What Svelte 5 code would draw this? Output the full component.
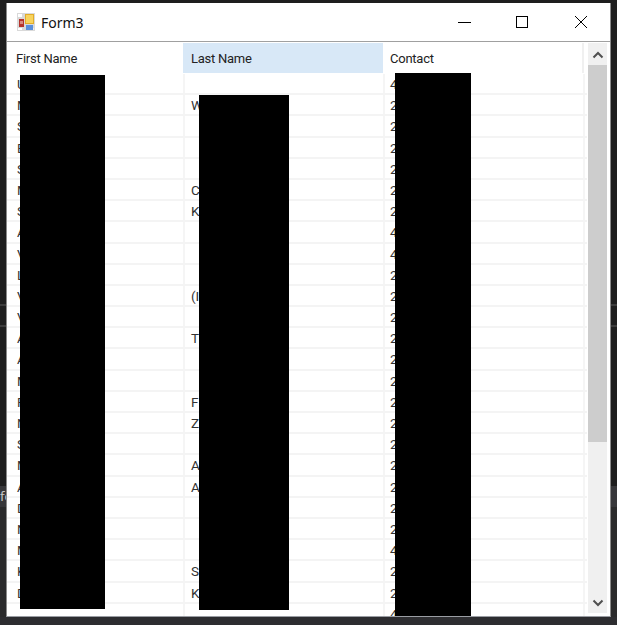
<script>
	// first letters that stay visible beside the redaction blocks, row by row
	const rows = [
		['U', '', '4'], ['M', 'W', '2'], ['S', '', '2'], ['B', '', '2'], ['S', '', '2'],
		['M', 'C', '2'], ['S', 'K', '2'], ['A', '', '4'], ['V', '', '4'], ['L', '', '2'],
		['V', '(I', '2'], ['V', '', '2'], ['A', 'T', '2'], ['A', '', '2'], ['M', '', '2'],
		['F', 'F', '2'], ['N', 'Z', '2'], ['S', '', '2'], ['M', 'A', '2'], ['A', 'A', '2'],
		['D', '', '2'], ['N', '', '2'], ['M', '', '4'], ['K', 'S', '2'], ['D', 'K', '2'],
		['', '', '4']
	];
</script>

<div class="desktop">
	<span class="behind">fo</span>
	<div class="window">
		<div class="titlebar">
			<svg class="appicon" width="18" height="18" viewBox="0 0 18 18">
				<rect x="0" y="0" width="18" height="18" fill="#d9d9d9" />
				<rect x="1" y="1" width="4" height="3" fill="#fff" />
				<rect x="1" y="15" width="4" height="2" fill="#fff" />
				<rect x="13" y="15" width="4" height="2" fill="#eee" />
				<rect x="2" y="6" width="5" height="8" fill="#b5332c" />
				<rect x="3" y="8" width="3" height="3" fill="#d98a80" />
				<rect x="8" y="1" width="9" height="10" fill="#e2ad2a" />
				<rect x="9" y="2" width="7" height="8" fill="#f8d45e" />
				<rect x="9" y="12" width="7" height="5" fill="#5a90dc" />
			</svg>
			<span class="title">Form3</span>
			<div class="controls">
				<svg width="14" height="14" viewBox="0 0 14 14"><path d="M0 7.5H13" stroke="#000" fill="none" /></svg>
				<svg width="14" height="14" viewBox="0 0 14 14"><rect x="0.5" y="1.5" width="11" height="11" stroke="#000" fill="none" /></svg>
				<svg width="14" height="14" viewBox="0 0 14 14"><path d="M1 1L13 13M13 1L1 13" stroke="#000" fill="none" /></svg>
			</div>
		</div>
		<div class="body">
			<div class="grid">
				<div class="head">
					<div class="hcell hfirst">First Name</div>
					<div class="hcell hsecond">Last Name</div>
					<div class="hcell hthird">Contact</div>
				</div>
				{#each rows as row}
					<div class="row">
						<div class="cell first">{row[0]}</div>
						<div class="cell second">{row[1]}</div>
						<div class="cell third">{row[2]}</div>
					</div>
				{/each}
				<div class="redact r1"></div>
				<div class="redact r2"></div>
				<div class="redact r3"></div>
			</div>
			<div class="scrollbar">
				<svg class="arrow" width="12" height="8" viewBox="0 0 12 8"><path d="M1.5 6.5L6 2L10.5 6.5" stroke="#505050" stroke-width="2" fill="none" /></svg>
				<div class="track"><div class="thumb"></div></div>
				<svg class="arrow" width="12" height="8" viewBox="0 0 12 8"><path d="M1.5 1.5L6 6L10.5 1.5" stroke="#505050" stroke-width="2" fill="none" /></svg>
			</div>
		</div>
	</div>
</div>

<style>
	:global(body) {
		margin: 0;
		background: #1e1e1e;
	}

	.desktop {
		position: relative;
		width: 617px;
		height: 625px;
		box-sizing: border-box;
		padding: 3px 6px 8px 6px;
		overflow: hidden;
		background: linear-gradient(
			#1e1e1e 0 304px,
			#3c3c3c 304px 306px,
			#1e1e1e 306px 325px,
			#3c3c3c 325px 327px,
			#1e1e1e 327px 486px,
			#37373a 486px 507px,
			#2a2a2b 507px 617px,
			#2d2d30 617px
		);
	}

	.behind {
		position: absolute;
		left: 0;
		top: 489px;
		font: 13px "DejaVu Sans", sans-serif;
		color: #c8c8c8;
	}

	.window {
		position: relative;
		width: 605px;
		height: 614px;
		background: #fff;
		border-left: 1px solid #8a8a8a;
		border-right: 1px solid #8a8a8a;
		border-bottom: 1px solid #9a9da3;
		box-sizing: border-box;
		display: flex;
		flex-direction: column;
		font-family: Roboto, "Liberation Sans", sans-serif;
	}

	.titlebar {
		height: 38px;
		display: flex;
		align-items: center;
		padding-left: 10px;
		border-bottom: 1px solid #a0a0a0;
		flex: none;
	}

	.appicon {
		margin-right: 6px;
	}

	.title {
		font-family: "Noto Sans", sans-serif;
		font-size: 14px;
		color: #111;
	}

	.controls {
		margin-left: auto;
		display: flex;
		gap: 44px;
		padding-right: 22px;
	}

	.body {
		flex: 1;
		display: flex;
		min-height: 0;
		overflow: hidden;
	}

	.grid {
		position: relative;
		width: 581px;
		flex: none;
		overflow: hidden;
	}

	.head {
		display: flex;
		height: 30px;
		margin: 1px 0;
		font-size: 13px;
		letter-spacing: -0.25px;
		color: #222;
	}

	.hcell {
		display: flex;
		align-items: center;
		box-sizing: border-box;
		height: 100%;
	}

	.hfirst {
		width: 176px;
		padding-left: 9px;
	}

	.hsecond {
		width: 200px;
		padding-left: 8px;
		background: #d8e8f7;
	}

	.hthird {
		width: 201px;
		padding-left: 7px;
		border-right: 2px solid #f0f0f0;
	}

	.row {
		display: flex;
		width: 580px;
		height: 21.2px;
		box-sizing: border-box;
		border-bottom: 2px solid #f4f4f4;
		font-size: 13.5px;
		color: #333;
	}

	.cell {
		box-sizing: border-box;
		line-height: 21px;
		border-right: 2px solid #f5f5f5;
		white-space: nowrap;
		overflow: hidden;
	}

	.first {
		width: 178px;
		padding-left: 10px;
	}

	.second {
		width: 200px;
		padding-left: 6px;
	}

	.third {
		width: 200px;
		padding-left: 5px;
	}

	.redact {
		position: absolute;
		background: #000;
	}

	.r1 {
		left: 13px;
		top: 33px;
		width: 85px;
		height: 534px;
	}

	.r2 {
		left: 192px;
		top: 53px;
		width: 90px;
		height: 515px;
	}

	.r3 {
		left: 388px;
		top: 31px;
		width: 76px;
		height: 545px;
	}

	.scrollbar {
		width: 19px;
		margin-top: 1px;
		margin-bottom: 3px;
		background: #f0f0f0;
		display: flex;
		flex-direction: column;
		align-items: center;
	}

	.arrow {
		flex: none;
		margin: 8px 0 6px;
	}

	.track {
		flex: 1;
		width: 100%;
	}

	.thumb {
		height: 377px;
		background: #cdcdcd;
	}
</style>
